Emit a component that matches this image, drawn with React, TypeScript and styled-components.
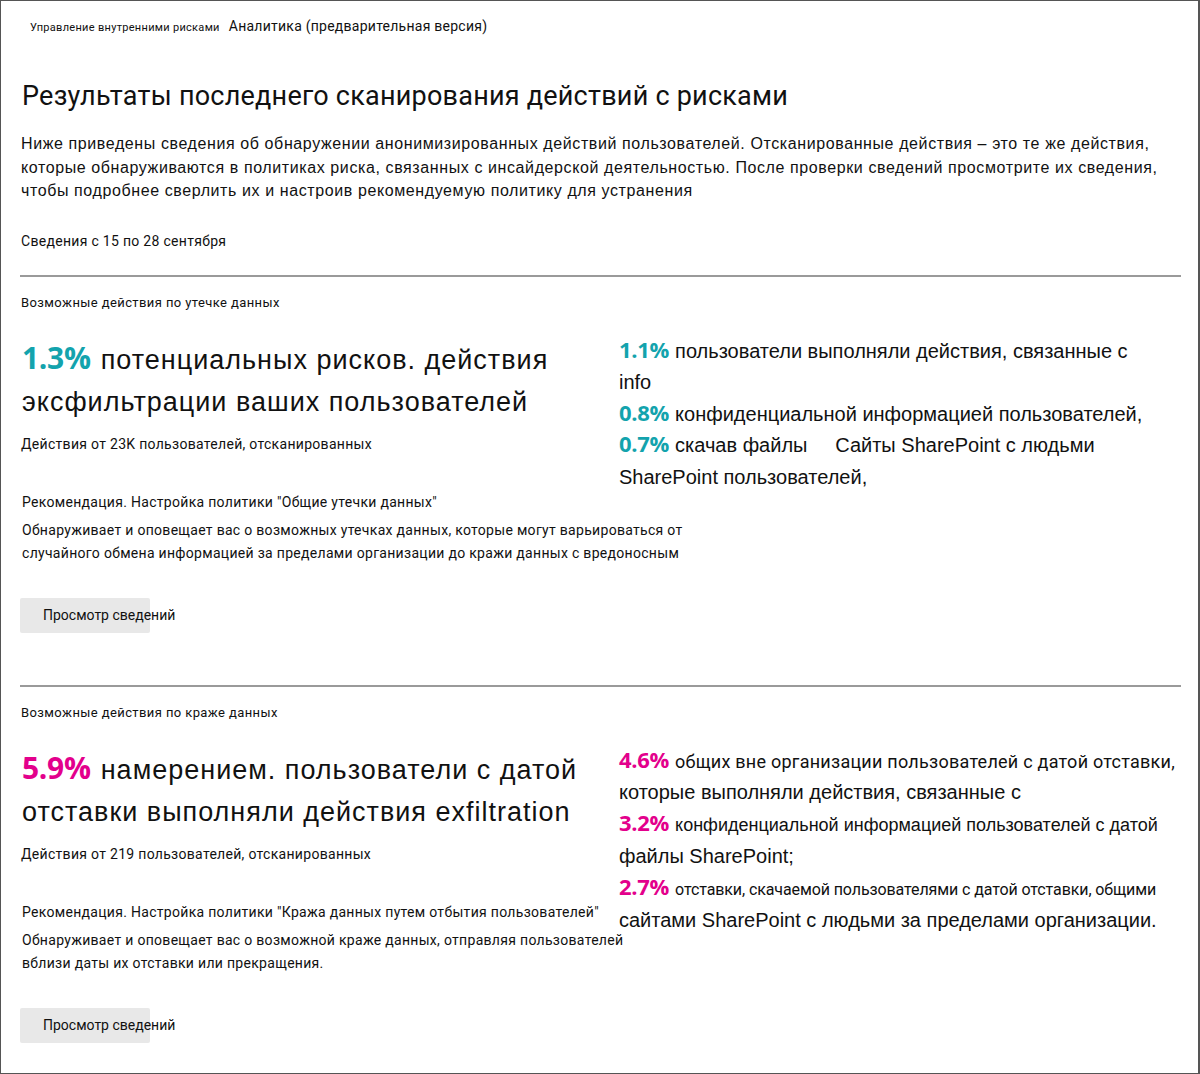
import React from 'react';
import styled, { createGlobalStyle } from 'styled-components';

const GlobalStyle = createGlobalStyle`
    * { box-sizing: border-box; }
    html, body { margin: 0; padding: 0; background: #ffffff; }
    body { font-family: Roboto, "Liberation Sans", sans-serif; color: #111111; }
`;

const Page = styled.div`
    width: 1200px;
    height: 1074px;
    border: 1px solid #555555;
    border-right-width: 2px;
    padding: 17px 18px 0 19px;
    overflow: hidden;
`;

const Breadcrumb = styled.div`
    display: flex;
    align-items: baseline;
    gap: 9px;
    padding-left: 10px;
    height: 18px;
`;

const Crumb = styled.span<{ $small?: boolean }>`
    font-family: Roboto, sans-serif;
    font-size: ${({ $small }) => $small ? '11px' : '14px'};
    letter-spacing: ${({ $small }) => $small ? '0.3px' : '0.25px'};
    color: #111;
`;

const Title = styled.h1`
    margin: 43px 0 0 2px;
    font-family: Roboto, sans-serif;
    font-weight: 400;
    font-size: 27px;
    line-height: 34px;
    letter-spacing: 0.23px;
`;

const Intro = styled.p`
    margin: 19px 0 0 1px;
    font-family: "Liberation Sans", Arial, sans-serif;
    font-size: 16px;
    line-height: 23.5px;
    letter-spacing: 0.6px;
    max-width: 1150px;
`;

const Period = styled.div`
    margin: 28px 0 24px 1px;
    font-family: Roboto, sans-serif;
    font-size: 14px;
    line-height: 20px;
    letter-spacing: 0.3px;
`;

const Divider = styled.hr`
    margin: 0;
    border: 0;
    height: 2px;
    background: #9a9a9a;
    width: 1161px;
`;

const Section = styled.section`
    padding-top: 17px;
    padding-bottom: 52px;
`;

const SectionLabel = styled.div`
    font-family: Roboto, sans-serif;
    font-size: 13px;
    line-height: 18px;
    letter-spacing: 0.4px;
    padding-left: 1px;
`;

const Columns = styled.div`
    display: grid;
    grid-template-columns: 599px 1fr;
    margin-top: 27px;
    align-items: start;
`;

const LeftCol = styled.div`
    display: flex;
    flex-direction: column;
    min-width: 0;
`;

const Headline = styled.div`
    font-family: "Liberation Sans", Arial, sans-serif;
    font-size: 27px;
    line-height: 42px;
    letter-spacing: 1px;
    padding-left: 2px;
`;

const Percent = styled.span<{ $tone: 'teal' | 'pink'; $size: number; $gap: number }>`
    font-family: "Open Sans", "Noto Sans", sans-serif;
    font-weight: 700;
    font-size: ${({ $size }) => $size}px;
    line-height: 1;
    color: ${({ $tone }) => $tone === 'teal' ? '#13a3ad' : '#e3008c'};
    margin-right: ${({ $gap }) => $gap}px;
    letter-spacing: -0.3px;
`;

const Scanned = styled.div`
    margin-top: 11px;
    font-family: Roboto, sans-serif;
    font-size: 14px;
    line-height: 20px;
    letter-spacing: 0.3px;
    padding-left: 1px;
`;

const Recommendation = styled.div`
    margin-top: 37px;
    font-family: Roboto, sans-serif;
    font-size: 14px;
    line-height: 23px;
    letter-spacing: 0.3px;
    padding-left: 2px;
`;

const Description = styled.div<{ $width: number }>`
    margin-top: 5px;
    width: ${({ $width }) => $width}px;
    font-family: Roboto, sans-serif;
    font-size: 14px;
    line-height: 23px;
    letter-spacing: 0.3px;
    padding-left: 2px;
`;

const Button = styled.button`
    margin-top: 33px;
    width: 130px;
    height: 35px;
    padding: 0 0 0 23px;
    border: 0;
    border-radius: 2px;
    background: #e8e8e8;
    text-align: left;
    white-space: nowrap;
    overflow: visible;
    font-family: Roboto, sans-serif;
    font-size: 14px;
    color: #111;
    cursor: pointer;
`;

const RightCol = styled.div`
    margin-top: -3px;
    font-family: "Liberation Sans", Arial, sans-serif;
    font-size: 20px;
    line-height: 31.5px;
    color: #111;
`;

const Stat = styled.div`
    white-space: nowrap;
`;

// parts of the findings are set in a narrower face, as in the source
const Run = styled.span<{ $size: number; $narrow?: boolean; $spacing?: number }>`
    font-family: ${({ $narrow }) => $narrow ? 'Roboto, sans-serif' : '"Liberation Sans", Arial, sans-serif'};
    font-size: ${({ $size }) => $size}px;
    letter-spacing: ${({ $spacing }) => $spacing ?? 0}px;
`;

type Tone = 'teal' | 'pink';

type Finding = {
    percent: string;
    lines: React.ReactNode;
};

type Block = {
    label: string;
    tone: Tone;
    percent: string;
    headline: string;
    scanned: string;
    recommendation: string;
    description: string;
    descWidth: number;
    findings: Finding[];
};

const blocks: Block[] = [
    {
        label: 'Возможные действия по утечке данных',
        tone: 'teal',
        percent: '1.3%',
        headline: 'потенциальных рисков. действия эксфильтрации ваших пользователей',
        scanned: 'Действия от 23K пользователей, отсканированных',
        recommendation: 'Рекомендация. Настройка политики "Общие утечки данных"',
        description: 'Обнаруживает и оповещает вас о возможных утечках данных, которые могут варьироваться от случайного обмена информацией за пределами организации до кражи данных с вредоносным',
        descWidth: 690,
        findings: [
            { percent: '1.1%', lines: <>пользователи выполняли действия, связанные с<br />info</> },
            { percent: '0.8%', lines: <>конфиденциальной информацией пользователей,</> },
            { percent: '0.7%', lines: <>скачав файлы&nbsp;&nbsp;&nbsp;&nbsp; Сайты SharePoint с людьми<br />SharePoint пользователей,</> },
        ],
    },
    {
        label: 'Возможные действия по краже данных',
        tone: 'pink',
        percent: '5.9%',
        headline: 'намерением. пользователи с датой отставки выполняли действия exfiltration',
        scanned: 'Действия от 219 пользователей, отсканированных',
        recommendation: 'Рекомендация. Настройка политики "Кража данных путем отбытия пользователей"',
        description: 'Обнаруживает и оповещает вас о возможной краже данных, отправляя пользователей вблизи даты их отставки или прекращения.',
        descWidth: 612,
        findings: [
            { percent: '4.6%', lines: <><Run $size={18} $narrow $spacing={0.25}>общих вне организации пользователей с датой отставки,</Run><br />которые выполняли действия, связанные с</> },
            { percent: '3.2%', lines: <><Run $size={18}>конфиденциальной информацией пользователей с датой</Run><br />файлы SharePoint;</> },
            { percent: '2.7%', lines: <><Run $size={16} $narrow $spacing={-0.1}>отставки, скачаемой пользователями с датой отставки, общими</Run><br />сайтами SharePoint с людьми за пределами организации.</> },
        ],
    },
];

const FindingsBlock = ({ block }: { block: Block }) => (
    <Section>
        <SectionLabel>{block.label}</SectionLabel>
        <Columns>
            <LeftCol>
                <Headline>
                    <Percent $tone={block.tone} $size={30} $gap={10}>{block.percent}</Percent>
                    <span>{block.headline}</span>
                </Headline>
                <Scanned>{block.scanned}</Scanned>
                <Recommendation>{block.recommendation}</Recommendation>
                <Description $width={block.descWidth}>{block.description}</Description>
                <div><Button>Просмотр сведений</Button></div>
            </LeftCol>
            <RightCol>
                {block.findings.map(f => (
                    <Stat key={f.percent}>
                        <Percent $tone={block.tone} $size={22} $gap={6}>{f.percent}</Percent>
                        {f.lines}
                    </Stat>
                ))}
            </RightCol>
        </Columns>
    </Section>
);

const App = () => (
    <>
        <GlobalStyle />
        <Page>
            <Breadcrumb>
                <Crumb $small>Управление внутренними рисками</Crumb>
                <Crumb>Аналитика (предварительная версия)</Crumb>
            </Breadcrumb>
            <Title>Результаты последнего сканирования действий с рисками</Title>
            <Intro>
                Ниже приведены сведения об обнаружении анонимизированных действий пользователей. Отсканированные действия – это те же действия, которые обнаруживаются в политиках риска, связанных с инсайдерской деятельностью. После проверки сведений просмотрите их сведения, чтобы подробнее сверлить их и настроив рекомендуемую политику для устранения
            </Intro>
            <Period>Сведения с 15 по 28 сентября</Period>
            {blocks.map(b => (
                <React.Fragment key={b.label}>
                    <Divider />
                    <FindingsBlock block={b} />
                </React.Fragment>
            ))}
        </Page>
    </>
);

export default App;
